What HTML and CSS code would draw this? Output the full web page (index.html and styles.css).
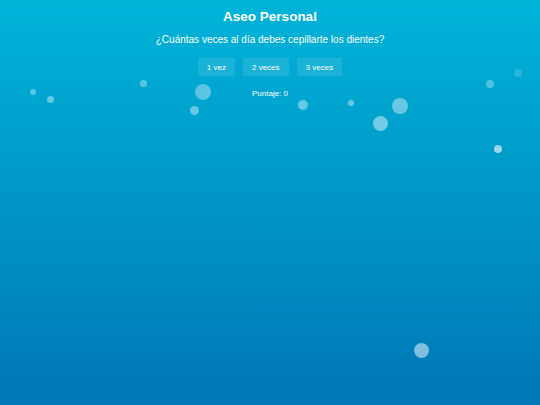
FILE: index.html
```html
<!DOCTYPE html>
<html lang="es">
<head>
<meta charset="utf-8">
<title>Aseo Personal</title>
<link rel="stylesheet" href="styles.css">
</head>
<body>
<main class="game">
  <h1 class="title">Aseo Personal</h1>
  <p class="question">¿Cuántas veces al día debes cepillarte los dientes?</p>
  <div class="options">
    <button class="option">1 vez</button>
    <button class="option">2 veces</button>
    <button class="option">3 veces</button>
  </div>
  <p class="score">Puntaje: 0</p>
</main>
<div class="bubbles">
  <span class="bubble" style="left:30px;top:89px;width:6px;height:6px;opacity:.35"></span>
  <span class="bubble" style="left:46.5px;top:95.5px;width:7px;height:7px;opacity:.4"></span>
  <span class="bubble" style="left:139.5px;top:80px;width:7px;height:7px;opacity:.35"></span>
  <span class="bubble" style="left:195px;top:84px;width:16px;height:16px;opacity:.35"></span>
  <span class="bubble" style="left:190px;top:106px;width:9px;height:9px;opacity:.4"></span>
  <span class="bubble" style="left:298px;top:100px;width:10px;height:10px;opacity:.4"></span>
  <span class="bubble" style="left:348px;top:100px;width:6px;height:6px;opacity:.4"></span>
  <span class="bubble" style="left:392px;top:97.5px;width:16px;height:16px;opacity:.4"></span>
  <span class="bubble" style="left:372.5px;top:115.5px;width:15px;height:15px;opacity:.45"></span>
  <span class="bubble" style="left:486px;top:80px;width:8px;height:8px;opacity:.3"></span>
  <span class="bubble" style="left:513.5px;top:68.5px;width:8px;height:8px;opacity:.15"></span>
  <span class="bubble" style="left:494px;top:145px;width:8px;height:8px;opacity:.6"></span>
  <span class="bubble" style="left:414px;top:342.5px;width:15px;height:15px;opacity:.5"></span>
</div>
</body>
</html>
```
FILE: styles.css
```css
html, body {
  margin: 0;
  height: 100%;
}
body {
  background: linear-gradient(to bottom, #00b4d8, #0077b6);
  font-family: "Liberation Sans", Arial, sans-serif;
  color: #fff;
  overflow: hidden;
  position: relative;
}
.game {
  display: flex;
  flex-direction: column;
  align-items: center;
  padding-top: 8px;
}
.title {
  margin: 0;
  font-size: 13.5px;
  line-height: 17px;
  font-weight: bold;
}
.question {
  margin: 8px 0 0;
  font-size: 10px;
  line-height: 14px;
}
.options {
  display: flex;
  gap: 8px;
  margin-top: 11px;
}
.option {
  border: none;
  background: rgba(255, 255, 255, 0.1);
  color: #fff;
  font-family: inherit;
  font-size: 8px;
  height: 18px;
  padding: 0 9px;
  border-radius: 1px;
}
.score {
  margin: 13px 0 0;
  font-size: 8px;
  line-height: 10px;
}
.bubbles {
  position: absolute;
  inset: 0;
  pointer-events: none;
}
.bubble {
  position: absolute;
  border-radius: 50%;
  background: #fff;
}
```
